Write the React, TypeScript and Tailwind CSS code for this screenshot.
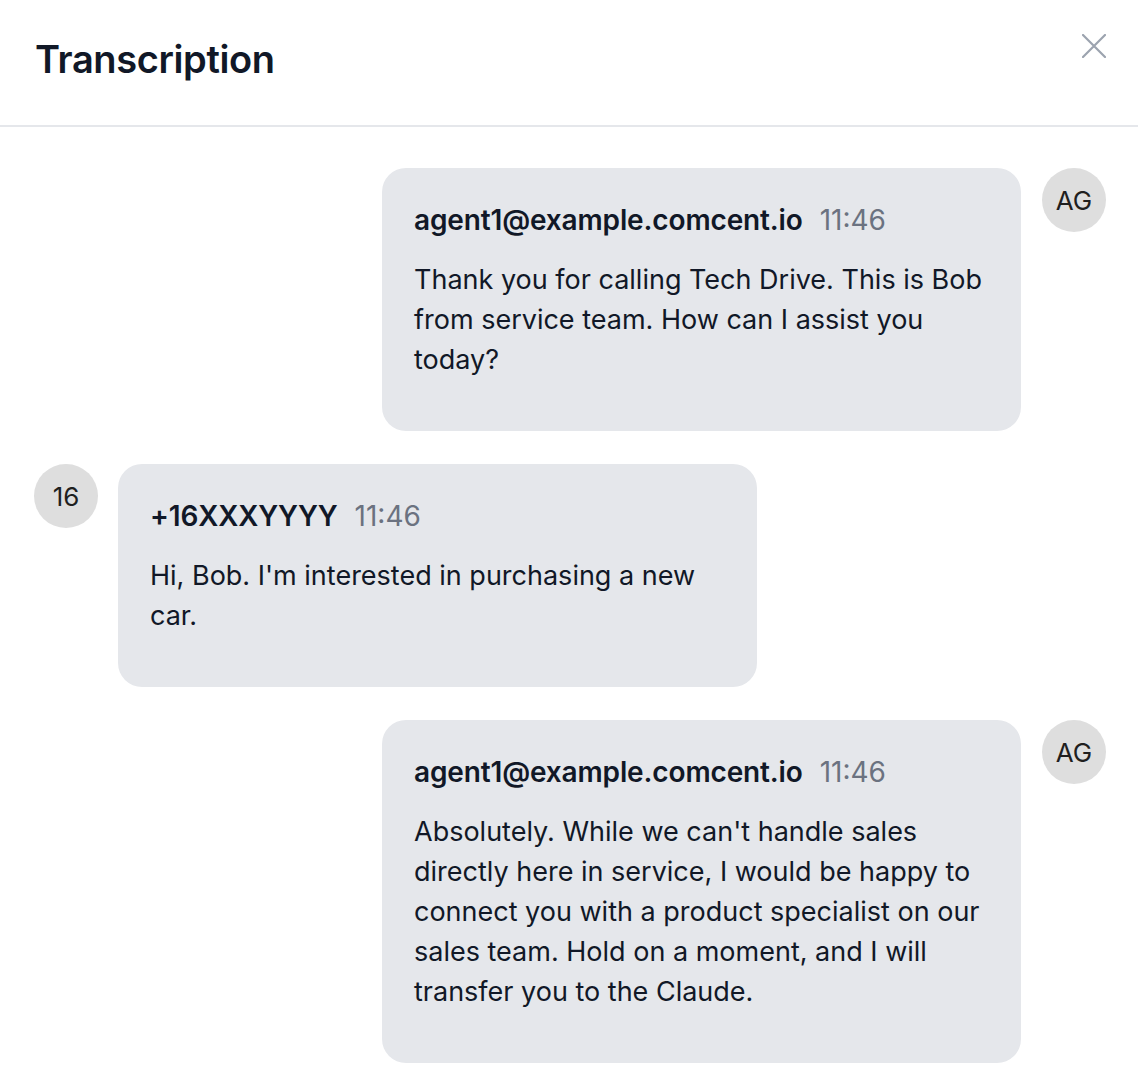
const messages = [
  {
    id: 1,
    side: 'agent',
    initials: 'AG',
    name: 'agent1@example.comcent.io',
    time: '11:46',
    text: 'Thank you for calling Tech Drive. This is Bob from service team. How can I assist you today?',
  },
  {
    id: 2,
    side: 'caller',
    initials: '16',
    name: '+16XXXYYYY',
    time: '11:46',
    text: "Hi, Bob. I'm interested in purchasing a new car.",
  },
  {
    id: 3,
    side: 'agent',
    initials: 'AG',
    name: 'agent1@example.comcent.io',
    time: '11:46',
    text: "Absolutely. While we can't handle sales directly here in service, I would be happy to connect you with a product specialist on our sales team. Hold on a moment, and I will transfer you to the Claude.",
  },
] as const

function Avatar({ initials }: { initials: string }) {
  return (
    <div className="flex h-16 w-16 shrink-0 items-center justify-center rounded-full bg-[#dedede] text-[26px] text-[#1f1f1f]">
      {initials}
    </div>
  )
}

export default function App() {
  return (
    <div
      className="min-h-screen bg-white text-[#111827]"
      style={{ fontFamily: 'Inter, "Noto Sans", sans-serif' }}
    >
      <header className="flex h-[127px] items-start justify-between border-b-2 border-[#e5e7eb] pl-[35px] pr-[32px]">
        <h1 className="mt-[35px] text-[38px] leading-[48px] font-semibold tracking-[-0.01em] text-[#111827]">Transcription</h1>
        <button className="mt-[34px] text-[#9ca3af]">
          <svg width="24" height="24" viewBox="0 0 24 24" fill="none" stroke="currentColor" strokeWidth="2.2" strokeLinecap="round">
            <path d="M1 1 L23 23 M23 1 L1 23" />
          </svg>
        </button>
      </header>

      <div className="flex flex-col gap-[33px] px-[32px] pt-[41px] pb-5">
        {messages.map((m) => {
          const isAgent = m.side === 'agent'
          return (
            <div
              key={m.id}
              className={isAgent ? 'flex items-start justify-end gap-[21px]' : 'flex items-start justify-start gap-5 pl-[2px]'}
            >
              {!isAgent && <Avatar initials={m.initials} />}
              <div className="w-[639px] rounded-[24px] bg-[#e5e7eb] px-8 pt-8 pb-[51px]">
                <div className="flex items-baseline gap-[17px] text-[28px] leading-[40px]">
                  <span className="font-semibold tracking-[-0.005em] text-[#111827]">{m.name}</span>
                  <span className="text-[#6b7280]">{m.time}</span>
                </div>
                <p className="mt-5 text-[27px] leading-[40px] text-[#111827]">{m.text}</p>
              </div>
              {isAgent && <Avatar initials={m.initials} />}
            </div>
          )
        })}
      </div>
    </div>
  )
}
